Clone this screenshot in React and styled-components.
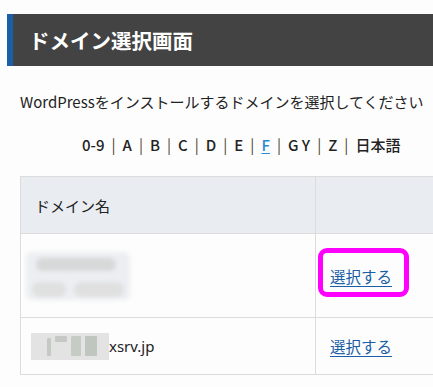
import React from "react";
import styled, { createGlobalStyle } from "styled-components";

const Global = createGlobalStyle`
  html, body { margin: 0; padding: 0; background: #fdfdfd; overflow: hidden; }
  body { font-family: "Noto Sans CJK JP", "Noto Sans", sans-serif; color: #222; }
`;

const Page = styled.div`
  width: 433px;
  height: 387px;
  padding-top: 14px;
  box-sizing: border-box;
  display: flex;
  flex-direction: column;
`;

const TitleBar = styled.h1`
  margin: 0 0 0 7px;
  height: 52px;
  box-sizing: border-box;
  background: #434343;
  border-left: 6px solid #1d5ea8;
  padding-left: 16px;
  display: flex;
  align-items: center;
  color: #fff;
  font-size: 20.5px;
  font-weight: 700;
`;

const Lead = styled.p`
  margin: 25px 0 0 20px;
  font-size: 15px;
  line-height: 22px;
  white-space: nowrap;
`;

const Letters = styled.div`
  margin: 21px 0 0 82px;
  font-size: 15px;
  line-height: 22px;
  font-weight: 500;
  white-space: nowrap;
  display: flex;
  align-items: center;
  gap: 7px;
`;

const Letter = styled.span`
  color: ${(p) => (p.$active ? "#2a8ad4" : "#222")};
  text-decoration: ${(p) => (p.$active ? "underline" : "none")};
  text-underline-offset: 2px;
`;

const Sep = styled.span`
  color: #4a3e2c;
  font-weight: 400;
`;

const Table = styled.table`
  margin: 20px 0 0 20px;
  border-collapse: collapse;
  width: 460px;
  font-size: 15px;
`;

const HeadCell = styled.th`
  background: #e9ecf1;
  border: 1px solid #dcdcdc;
  height: 57px;
  padding: 0 0 0 14px;
  text-align: left;
  font-weight: 400;
  width: ${(p) => p.$w || "auto"};
  box-sizing: border-box;
`;

const Cell = styled.td`
  border: 1px solid #dcdcdc;
  height: ${(p) => p.$h}px;
  padding: 0 0 0 ${(p) => p.$pl ?? 14}px;
  box-sizing: border-box;
  vertical-align: middle;
  background: #fdfdfd;
`;

const SelectLink = styled.a`
  color: #1a5ea6;
  text-decoration: underline;
  text-underline-offset: 3px;
  font-size: 15.5px;
  position: relative;
  display: inline-block;
  line-height: 22px;
`;

const Highlight = styled.span`
  position: absolute;
  left: -12px;
  top: -17px;
  width: 91px;
  height: 49px;
  border: 5px solid #ff00ff;
  border-radius: 9px;
  box-sizing: border-box;
  pointer-events: none;
`;

const BlurBlock = styled.div`
  width: 104px;
  height: 48px;
  margin-left: -8px;
  box-sizing: border-box;
  padding: 6px 6px 3px 10px;
  background: #eceef2;
  filter: blur(2px);
  border-radius: 6px;
  display: flex;
  flex-direction: column;
  gap: 11px;
`;

const BlobRow = styled.div`
  display: flex;
  gap: 8px;
  margin-left: ${(p) => p.$shift ?? 0}px;
`;

const Blob = styled.div`
  width: ${(p) => p.$w}px;
  height: ${(p) => p.$h}px;
  border-radius: 8px;
  background: ${(p) => p.$c || "#d7d8d8"};
`;

const Domain = styled.div`
  display: flex;
  align-items: center;
`;

const Masked = styled.div`
  width: 78px;
  height: 27px;
  box-sizing: border-box;
  padding: 3px 0 0 16px;
  background: #e2e3e2;
  filter: blur(0.7px);
  display: flex;
  align-items: flex-start;
  gap: 4px;
`;

const Bar = styled.div`
  width: ${(p) => p.$w}px;
  height: ${(p) => p.$h}px;
  margin-top: ${(p) => p.$t ?? 0}px;
  background: ${(p) => p.$c || "#c4c9c4"};
  border-radius: 1px;
`;

const DomainText = styled.span`
  font-size: 15px;
  font-family: "Noto Sans", "Noto Sans CJK JP", sans-serif;
`;

export default function App() {
  const letters = ["0-9", "A", "B", "C", "D", "E", "F", "G Y", "Z", "日本語"];
  return (
    <>
      <Global />
      <Page>
        <TitleBar>ドメイン選択画面</TitleBar>
        <Lead>WordPressをインストールするドメインを選択してください</Lead>
        <Letters>
          {letters.map((l, i) => (
            <React.Fragment key={l}>
              {i > 0 && <Sep>|</Sep>}
              <Letter $active={l === "F"}>{l}</Letter>
            </React.Fragment>
          ))}
        </Letters>
        <Table>
          <thead>
            <tr>
              <HeadCell $w="295px">ドメイン名</HeadCell>
              <HeadCell />
            </tr>
          </thead>
          <tbody>
            <tr>
              <Cell $h={84} $pl={13}>
                <BlurBlock>
                  <BlobRow>
                    <Blob $w={80} $h={13} />
                  </BlobRow>
                  <BlobRow $shift={-4}>
                    <Blob $w={34} $h={15} $c="#dfe0df" />
                    <Blob $w={50} $h={15} $c="#dfe0df" />
                  </BlobRow>
                </BlurBlock>
              </Cell>
              <Cell $h={84}>
                <SelectLink href="#">
                  選択する
                  <Highlight />
                </SelectLink>
              </Cell>
            </tr>
            <tr>
              <Cell $h={57} $pl={10}>
                <Domain>
                  <Masked>
                    <Bar $w={4} $h={18} $t={2} />
                    <Bar $w={12} $h={6} />
                    <Bar $w={10} $h={20} $c="#c6cbc6" />
                    <Bar $w={12} $h={20} $c="#bfc6c0" />
                  </Masked>
                  <DomainText>xsrv.jp</DomainText>
                </Domain>
              </Cell>
              <Cell $h={57}>
                <SelectLink href="#">選択する</SelectLink>
              </Cell>
            </tr>
          </tbody>
        </Table>
      </Page>
    </>
  );
}
